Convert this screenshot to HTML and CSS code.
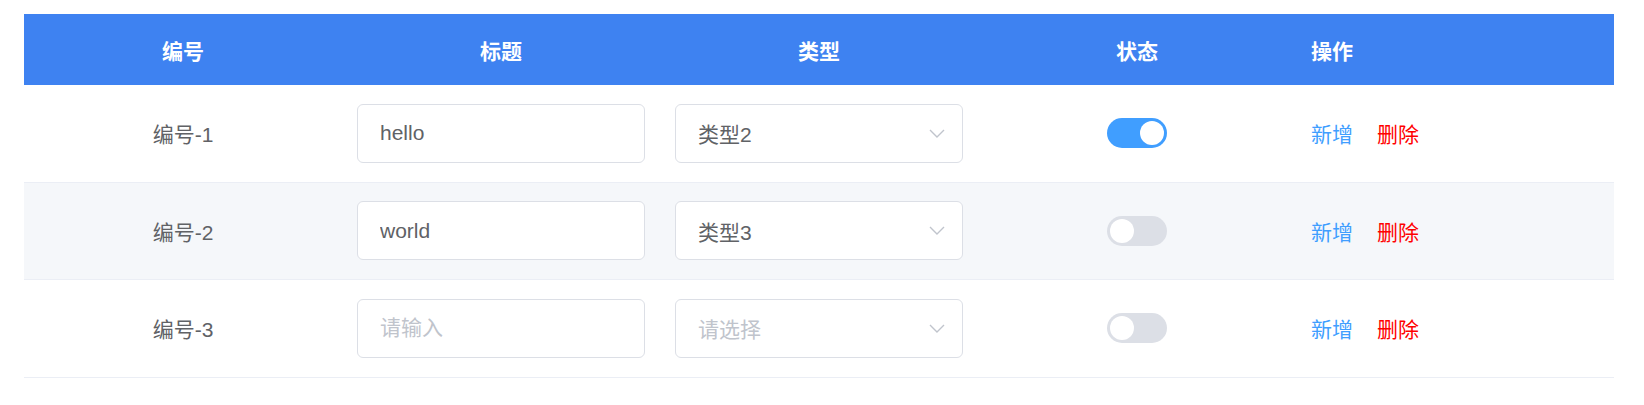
FILE: index.html
```html
<!DOCTYPE html>
<html lang="zh-CN">
<head>
<meta charset="utf-8">
<title>表格</title>
<link rel="stylesheet" href="styles.css">
</head>
<body>
<div class="page">
  <div class="table">
    <div class="row head">
      <div class="cell center">编号</div>
      <div class="cell center">标题</div>
      <div class="cell center">类型</div>
      <div class="cell center">状态</div>
      <div class="cell left">操作</div>
    </div>

    <div class="row">
      <div class="cell center">编号-1</div>
      <div class="cell"><input class="input" value="hello" placeholder="请输入"></div>
      <div class="cell">
        <div class="select"><span class="select-text">类型2</span>
          <svg class="arrow" width="16" height="9" viewBox="0 0 16 9"><polyline points="1,1 8,8 15,1" fill="none" stroke="#c0c4cc" stroke-width="1.4"/></svg>
        </div>
      </div>
      <div class="cell center"><span class="switch on"><span class="knob"></span></span></div>
      <div class="cell left ops"><span class="link add">新增</span><span class="link del">删除</span></div>
    </div>

    <div class="row striped">
      <div class="cell center">编号-2</div>
      <div class="cell"><input class="input" value="world" placeholder="请输入"></div>
      <div class="cell">
        <div class="select"><span class="select-text">类型3</span>
          <svg class="arrow" width="16" height="9" viewBox="0 0 16 9"><polyline points="1,1 8,8 15,1" fill="none" stroke="#c0c4cc" stroke-width="1.4"/></svg>
        </div>
      </div>
      <div class="cell center"><span class="switch"><span class="knob"></span></span></div>
      <div class="cell left ops"><span class="link add">新增</span><span class="link del">删除</span></div>
    </div>

    <div class="row">
      <div class="cell center">编号-3</div>
      <div class="cell"><input class="input" value="" placeholder="请输入"></div>
      <div class="cell">
        <div class="select"><span class="select-text placeholder">请选择</span>
          <svg class="arrow" width="16" height="9" viewBox="0 0 16 9"><polyline points="1,1 8,8 15,1" fill="none" stroke="#c0c4cc" stroke-width="1.4"/></svg>
        </div>
      </div>
      <div class="cell center"><span class="switch"><span class="knob"></span></span></div>
      <div class="cell left ops"><span class="link add">新增</span><span class="link del">删除</span></div>
    </div>
  </div>
</div>
</body>
</html>
```

FILE: styles.css
```css
* { box-sizing: border-box; }

html, body {
  margin: 0;
  background: #ffffff;
}

body {
  font-family: "Liberation Sans", "Noto Sans CJK SC", sans-serif;
  font-size: 21px;
  color: #606266;
}

.page {
  padding: 14px 30px 0 24px;
}

.table {
  width: 1590px;
}

.row {
  display: grid;
  grid-template-columns: repeat(5, 1fr);
  height: 97.5px;
  border-bottom: 1px solid #ebeef5;
  background: #ffffff;
}

.row.striped {
  background: #f5f7fa;
}

.row.head {
  height: 71px;
  background: #3e82f1;
  border-bottom: none;
  color: #ffffff;
  font-weight: bold;
}

.cell {
  display: flex;
  align-items: center;
  padding: 0 15px;
  min-width: 0;
}

.cell.center { justify-content: center; }
.cell.left { justify-content: flex-start; }

.ops { gap: 24px; }

.input {
  width: 100%;
  height: 59px;
  border: 1.5px solid #dcdfe6;
  border-radius: 6px;
  padding: 0 22px;
  font-family: "Liberation Sans", "Noto Sans CJK SC", sans-serif;
  font-size: 21px;
  color: #606266;
  background: #ffffff;
  outline: none;
}

.input::placeholder {
  color: #c0c4cc;
}

.select {
  width: 100%;
  height: 59px;
  border: 1.5px solid #dcdfe6;
  border-radius: 6px;
  padding: 0 17px 0 22px;
  background: #ffffff;
  display: flex;
  align-items: center;
  justify-content: space-between;
}

.select-text { color: #606266; }
.select-text.placeholder { color: #c0c4cc; }

.arrow { display: block; }

.switch {
  width: 60px;
  height: 30px;
  border-radius: 15px;
  background: #dcdfe6;
  padding: 3px;
  display: flex;
  justify-content: flex-start;
}

.switch.on {
  background: #409eff;
  justify-content: flex-end;
}

.knob {
  width: 24px;
  height: 24px;
  border-radius: 50%;
  background: #ffffff;
}

.link { cursor: pointer; }
.link.add { color: #409eff; }
.link.del { color: #ff0000; }
```
